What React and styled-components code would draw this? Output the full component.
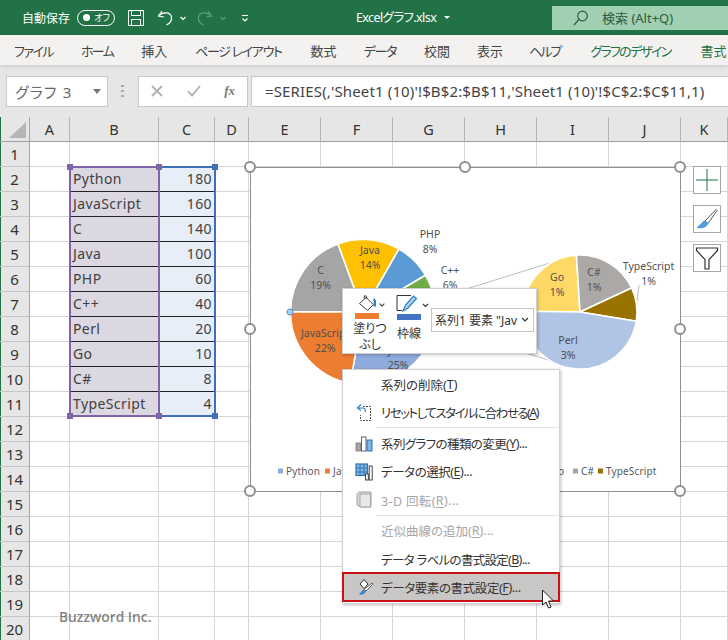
import styled, { createGlobalStyle } from 'styled-components'

const GlobalStyle = createGlobalStyle`
  html, body {
    margin: 0;
    padding: 0;
    background: #fff;
  }
  body {
    font-family: "Noto Sans", "Noto Sans CJK JP", sans-serif;
    font-feature-settings: "palt";
    color: #333;
  }
`

const Page = styled.div`
  position: relative;
  width: 728px;
  height: 640px;
  overflow: hidden;
  background: #fff;
`

/* title bar */
const TitleBar = styled.div`
  display: flex;
  align-items: center;
  height: 35px;
  background: #217346;
  color: #fff;
  font-size: 13px;
`

const AutoSave = styled.span`
  margin-left: 22px;
  font-size: 12px;
`

const Toggle = styled.span`
  display: flex;
  align-items: center;
  justify-content: space-between;
  box-sizing: border-box;
  width: 38px;
  height: 16px;
  margin-left: 7px;
  padding: 0 4px 0 5px;
  border: 1.2px solid #fff;
  border-radius: 8px;
  font-size: 9px;

  i {
    width: 7px;
    height: 7px;
    border-radius: 50%;
    background: #fff;
  }
`

const QatIcon = styled.svg`
  display: block;
  flex: none;
  margin-left: ${p => p.$ml}px;
`

const FileName = styled.span`
  position: absolute;
  left: 356px;
  top: 9px;
  font-size: 12.5px;
  line-height: 18px;
  letter-spacing: -0.6px;
`

const FileCaret = styled.span`
  position: absolute;
  left: 444px;
  top: 10px;
  width: 0;
  height: 0;
  border: 3px solid transparent;
  border-top: 3px solid #fff;
  margin-top: 6px;
`

const SearchBox = styled.div`
  display: flex;
  align-items: center;
  box-sizing: border-box;
  margin-left: auto;
  width: 176px;
  height: 24px;
  padding-left: 21px;
  gap: 13px;
  background: #a1cfb1;
  color: #2b5c41;
  font-size: 13px;
`

/* ribbon tabs */
const Tabs = styled.div`
  position: relative;
  z-index: 1;
  display: flex;
  align-items: center;
  height: 30px;
  padding-left: 14px;
  background: #f3f2f1;
  box-shadow: 0 2px 4px rgba(0, 0, 0, 0.1);
  font-size: 13px;
  white-space: nowrap;
`

const Tab = styled.span`
  margin-right: ${p => p.$gap || 28}px;
  letter-spacing: ${p => p.$ls || 0}px;
  color: ${p => (p.$active ? '#217346' : '#444')};
`

/* formula bar */
const FormulaBar = styled.div`
  display: flex;
  align-items: center;
  height: 52px;
  padding: 0 0 0 6px;
  background: #e6e6e6;
  box-sizing: border-box;
`

const NameBox = styled.div`
  display: flex;
  align-items: center;
  justify-content: space-between;
  box-sizing: border-box;
  width: 102px;
  height: 31px;
  padding: 0 6px 0 8px;
  background: #fff;
  border: 1px solid #c8c8c8;
  font-size: 15px;
  letter-spacing: 1.2px;
  color: #666;

  i {
    width: 0;
    height: 0;
    border: 4px solid transparent;
    border-top: 5px solid #777;
    margin-top: 4px;
  }
`

const Grip = styled.span`
  width: 3px;
  height: 12px;
  margin: 0 14px 0 13px;
  background: repeating-linear-gradient(#aaa 0 2px, transparent 2px 5px);
`

const FxBox = styled.div`
  display: flex;
  align-items: center;
  justify-content: space-between;
  box-sizing: border-box;
  width: 110px;
  height: 31px;
  padding: 0 12px;
  background: #fff;
  border: 1px solid #c8c8c8;
`

const FxText = styled.span`
  font-family: "Liberation Serif", serif;
  font-style: italic;
  font-weight: bold;
  font-size: 13px;
  color: #777;
`

const FormulaInput = styled.div`
  display: flex;
  align-items: center;
  box-sizing: border-box;
  flex: 1;
  height: 31px;
  margin-left: 3px;
  padding-left: 13px;
  background: #fff;
  border: 1px solid #c8c8c8;
  border-right: none;
  font-size: 15px;
  letter-spacing: 0.14px;
  color: #444;
  white-space: nowrap;
`

/* sheet */
const Sheet = styled.div`
  display: grid;
  grid-template-columns: 30px 40px 89px 56px 34px repeat(6, 72px) 47px;
  grid-auto-rows: 25px;
`

const Corner = styled.div`
  position: relative;
  background: #e6e6e6;
  border-right: 1px solid #a6a6a6;
  border-bottom: 1px solid #9f9f9f;
  box-shadow: inset 1px 0 0 #217346;

  &::after {
    content: '';
    position: absolute;
    right: 3px;
    bottom: 3px;
    border-style: solid;
    border-width: 0 0 16px 17px;
    border-color: transparent transparent #b5b5b5 transparent;
  }
`

const ColHead = styled.div`
  display: flex;
  align-items: center;
  justify-content: center;
  box-sizing: border-box;
  padding-bottom: 1px;
  background: #e6e6e6;
  border-right: 1px solid #b4b4b4;
  border-bottom: 1px solid #9f9f9f;
  font-size: 14.5px;
  color: #333;
`

const RowHead = styled.div`
  display: flex;
  align-items: center;
  justify-content: center;
  box-sizing: border-box;
  padding-bottom: 1px;
  background: #e6e6e6;
  border-right: 1px solid #a6a6a6;
  border-bottom: 1px solid #c6c6c6;
  box-shadow: inset 1px 0 0 #217346;
  font-size: 15px;
  color: #333;
`

const Cell = styled.div`
  display: flex;
  align-items: center;
  justify-content: ${p => (p.$num ? 'flex-end' : 'flex-start')};
  box-sizing: border-box;
  padding: 0 2px 2px 3px;
  background: ${p => p.$fill || '#fff'};
  border-right: 1px solid #d6d6d6;
  border-bottom: 1px solid ${p => (p.$fill ? '#222' : '#d6d6d6')};
  font-size: 14px;
  letter-spacing: 0.4px;
  color: #404040;
  white-space: nowrap;
`

/* range highlight round the chart's source cells */
const Range = styled.div`
  position: absolute;
  top: 166px;
  left: ${p => p.$left}px;
  width: ${p => p.$width}px;
  height: 251px;
  box-sizing: border-box;
  border: 2px solid ${p => p.$color};
`

const RangeHandle = styled.span`
  position: absolute;
  width: 6px;
  height: 6px;
  background: ${p => p.$color};
  ${p => (p.$right ? 'right: -4px;' : 'left: -4px;')}
  ${p => (p.$bottom ? 'bottom: -4px;' : 'top: -4px;')}
`

/* chart object */
const Chart = styled.div`
  position: absolute;
  left: 249.5px;
  top: 166.5px;
  width: 431.5px;
  height: 325px;
  box-sizing: border-box;
  background: #fff;
  border: 1.5px solid #8f8f8f;
`

const ChartHandle = styled.span`
  position: absolute;
  left: ${p => p.$x}px;
  top: ${p => p.$y}px;
  box-sizing: border-box;
  width: 12px;
  height: 12px;
  margin: -6px 0 0 -6px;
  background: #fff;
  border: 2px solid #8f8f8f;
  border-radius: 50%;
`

const PieSvg = styled.svg`
  position: absolute;
  left: -1px;
  top: 0;
  display: block;
`

const SideButtons = styled.div`
  position: absolute;
  left: 693px;
  top: 166px;
  display: flex;
  flex-direction: column;
  gap: 11px;
`

const SideButton = styled.div`
  display: flex;
  align-items: center;
  justify-content: center;
  box-sizing: border-box;
  width: 28px;
  height: 28px;
  background: #fff;
  border: 1px solid #a6a6a6;
`

/* mini toolbar */
const MiniBar = styled.div`
  position: absolute;
  left: 342px;
  top: 288px;
  display: flex;
  box-sizing: border-box;
  width: 195px;
  height: 66px;
  padding: 6px 0 0 9px;
  background: #fff;
  border: 1px solid #d0d0d0;
  box-shadow: 1px 1px 3px rgba(0, 0, 0, 0.25);
`

const MiniTool = styled.div`
  display: flex;
  flex-direction: column;
  align-items: ${p => (p.$start ? 'flex-start' : 'center')};
  width: ${p => p.$w}px;
  margin-right: ${p => p.$mr}px;
  font-size: 12px;
  line-height: 16px;
  color: #333;
  text-align: center;
`

const Swatch = styled.span`
  display: block;
  align-self: flex-start;
  margin-left: ${p => p.$ml}px;
  width: 24px;
  height: 6px;
  margin-top: 1px;
  margin-bottom: 2px;
  background: ${p => p.$color};
`

const MiniLabel = styled.span`
  margin: ${p => p.$mt || 0}px 0 0 ${p => p.$ml || 0}px;
`

const SeriesSelect = styled.div`
  display: flex;
  align-items: center;
  justify-content: space-between;
  box-sizing: border-box;
  width: 103px;
  height: 24px;
  margin-top: 13px;
  margin-left: -9px;
  padding: 0 3px 0 3px;
  border: 1px solid #c6c6c6;
  font-size: 12px;
  color: #333;
  white-space: nowrap;
  overflow: hidden;
`

/* context menu */
const Menu = styled.div`
  position: absolute;
  left: 342px;
  top: 369px;
  box-sizing: border-box;
  width: 218px;
  height: 235px;
  background: #fff;
  border: 1px solid #d0d0d0;
  box-shadow: 1px 1px 3px rgba(0, 0, 0, 0.25);
`

const MenuItem = styled.div`
  position: relative;
  display: flex;
  align-items: center;
  height: 28.5px;
  padding-left: 38px;
  font-size: 12.5px;
  letter-spacing: ${p => p.$ls || 0}px;
  color: ${p => (p.$disabled ? '#a6a6a6' : '#333')};
  white-space: nowrap;

  u {
    text-underline-offset: 2px;
  }
`

const ActiveItem = styled(MenuItem)`
  box-sizing: border-box;
  height: 30.5px;
  margin: -2px -1px 0;
  padding: 2px 0 0 37px;
  background: #c9c7c5;
  border: 2px solid #cc1016;
`

const MenuIcon = styled.svg`
  position: absolute;
  left: 12px;
  top: 50%;
  margin-top: -9px;
`

const MenuSep = styled.div`
  height: 2px;
  margin-left: 33px;
  background: linear-gradient(#e2e2e2 1px, transparent 1px);
`

const Watermark = styled.div`
  position: absolute;
  left: 59px;
  top: 608px;
  font-family: "Open Sans", sans-serif;
  font-weight: 600;
  font-size: 13.8px;
  line-height: 18px;
  color: rgba(90, 90, 90, 0.75);
`

const Pointer = styled.svg`
  position: absolute;
  left: 541px;
  top: 589px;
`

/* data */
const columns = ['A', 'B', 'C', 'D', 'E', 'F', 'G', 'H', 'I', 'J', 'K']
const languages = [
  ['Python', 180], ['JavaScript', 160], ['C', 140], ['Java', 100], ['PHP', 60],
  ['C++', 40], ['Perl', 20], ['Go', 10], ['C#', 8], ['TypeScript', 4],
]
const rows = Array.from({ length: 20 }, (_, i) => i + 1)

const mainSlices = [
  { from: -90, to: -20.2, color: '#a5a5a5' },
  { from: -20.2, to: 29.7, color: '#ffc000' },
  { from: 29.7, to: 59.6, color: '#5b9bd5' },
  { from: 59.6, to: 79.5, color: '#70ad47' },
  { from: 79.5, to: 100.45, color: '#264478' },
  { from: 100.45, to: 190.2, color: '#8faadc' },
  { from: 190.2, to: 270, color: '#ed7d31' },
]
const subSlices = [
  { from: -89.3, to: -3.6, color: '#ffd966' },
  { from: -3.6, to: 65, color: '#aba8a6' },
  { from: 65, to: 99.3, color: '#997300' },
  { from: 99.3, to: 270.7, color: '#b0c4e6' },
]
const labels = [
  ['PHP', '8%', 430, 238],
  ['C++', '6%', 450, 274],
  ['Java', '14%', 370, 254],
  ['C', '19%', 320.5, 274],
  ['JavaScript', '22%', 325, 337],
  ['Python', '25%', 398, 354],
  ['Go', '1%', 557, 281],
  ['C#', '1%', 594, 276],
  ['TypeScript', '1%', 648.5, 270],
  ['Perl', '3%', 568, 344],
]
const legend = [
  ['Python', 278, '#8faadc'],
  ['JavaScript', 325, '#ed7d31'],
  ['C#', 573, '#a5a5a5'],
  ['TypeScript', 598, '#997300'],
]

const slicePath = (cx, cy, r, from, to) => {
  const rad = a => (a * Math.PI) / 180
  const x1 = cx + r * Math.sin(rad(from))
  const y1 = cy - r * Math.cos(rad(from))
  const x2 = cx + r * Math.sin(rad(to))
  const y2 = cy - r * Math.cos(rad(to))
  const large = to - from > 180 ? 1 : 0
  return `M${cx} ${cy} L${x1} ${y1} A${r} ${r} 0 ${large} 1 ${x2} ${y2} Z`
}

const PieChart = () => (
  <PieSvg width="431" height="324" viewBox="250 168 431 324">
    <line x1="434" y1="299" x2="553" y2="262" stroke="#bdbdbd" />
    <line x1="434" y1="325" x2="578" y2="369" stroke="#bdbdbd" />
    <line x1="639" y1="285" x2="636.5" y2="305" stroke="#bdbdbd" />
    {mainSlices.map(s => (
      <path key={s.from} d={slicePath(363, 312, 72.5, s.from, s.to)} fill={s.color} stroke="#fff" strokeWidth="1.6" />
    ))}
    {subSlices.map(s => (
      <path key={s.from} d={slicePath(580, 312, 57, s.from, s.to)} fill={s.color} stroke="#fff" strokeWidth="1.6" />
    ))}
    <circle cx="290" cy="312" r="3" fill="#a9d0f0" stroke="#4a90d0" strokeWidth="1" />
    {labels.map(([name, pct, x, y]) => (
      <text key={name} x={x} textAnchor="middle" fontSize="10.5" fill="#505050" fontFamily="Noto Sans, sans-serif">
        <tspan x={x} y={y}>{name}</tspan>
        <tspan x={x} y={y + 15}>{pct}</tspan>
      </text>
    ))}
    {legend.map(([name, x, color]) => (
      <g key={name}>
        <rect x={x} y="468.5" width="5" height="5" fill={color} />
        <text x={x + 8} y="475" fontSize="10" fill="#595959" fontFamily="Noto Sans, sans-serif" letterSpacing="0.15">{name}</text>
      </g>
    ))}
    <text x="558" y="475" fontSize="10" fill="#595959" fontFamily="Noto Sans, sans-serif">o</text>
  </PieSvg>
)

const handles = [
  [-0.75, -0.75], [214, -0.75], [429, -0.75], [429, 161], [429, 323], [214, 323], [-0.75, 323], [-0.75, 161],
]

const App = () => {
  return (
    <Page>
      <GlobalStyle />
      <TitleBar>
        <AutoSave>自動保存</AutoSave>
        <Toggle><i />オフ</Toggle>
        <QatIcon $ml={13} width="16" height="16" viewBox="0 0 16 16" fill="none" stroke="#fff" strokeWidth="1">
          <path d="M.5.5h15v15H.5z" />
          <path d="M3.5.5v5h9v-5M3.5 15.5v-6h9v6" />
        </QatIcon>
        <QatIcon $ml={13} width="16" height="16" viewBox="0 0 16 16" fill="none" stroke="#fff" strokeWidth="1.2">
          <path d="M5 1 1.5 6l5.5 1" />
          <path d="M2 5.8C5 2 13.5 1.5 14.5 7c.5 3.5-2 6.5-5 8" />
        </QatIcon>
        <QatIcon $ml={6} width="8" height="8" viewBox="0 0 8 8" fill="none" stroke="#fff" strokeWidth="1.2">
          <path d="m1.500 3 2.500 2.500L6.500 3" />
        </QatIcon>
        <QatIcon $ml={10} width="16" height="16" viewBox="0 0 16 16" fill="none" stroke="#5c9c79" strokeWidth="1.2">
          <path d="m11 1 3.500 5L9 7" />
          <path d="M14 5.800C11 2 2.500 1.500 1.500 7c-.5 3.500 2 6.500 5 8" />
        </QatIcon>
        <QatIcon $ml={6} width="8" height="8" viewBox="0 0 8 8" fill="none" stroke="#5c9c79" strokeWidth="1.2">
          <path d="m1.500 3 2.500 2.500L6.500 3" />
        </QatIcon>
        <QatIcon $ml={14} width="8" height="8" viewBox="0 0 8 8" fill="none" stroke="#fff" strokeWidth="1.100">
          <path d="M1 1.500h6M1.500 4.500 4 7l2.500-2.500" />
        </QatIcon>
        <FileName>Excelグラフ.xlsx</FileName>
        <FileCaret />
        <SearchBox>
          <svg width="16" height="16" viewBox="0 0 16 16" fill="none" stroke="#2b5c41" strokeWidth="1.200">
            <circle cx="9.500" cy="6" r="4.800" />
            <path d="M6 9.500 1 15" />
          </svg>
          <span>検索 (Alt+Q)</span>
        </SearchBox>
      </TitleBar>

      <Tabs>
        <Tab $ls={-1.5}>ファイル</Tab>
        <Tab $ls={-1.7}>ホーム</Tab>
        <Tab>挿入</Tab>
        <Tab $ls={-1.35} $gap={29}>ページ レイアウト</Tab>
        <Tab $gap={27}>数式</Tab>
        <Tab $ls={-1.3}>データ</Tab>
        <Tab $gap={27}>校閲</Tab>
        <Tab $gap={26}>表示</Tab>
        <Tab $ls={-2} $gap={30}>ヘルプ</Tab>
        <Tab $active $ls={-1.75} $gap={30}>グラフのデザイン</Tab>
        <Tab $active>書式</Tab>
      </Tabs>

      <FormulaBar>
        <NameBox>グラフ 3<i /></NameBox>
        <Grip />
        <FxBox>
          <svg width="12" height="12" viewBox="0 0 12 12" stroke="#b0b0b0" strokeWidth="1.800">
            <path d="m1 1 10 10M11 1 1 11" />
          </svg>
          <svg width="14" height="12" viewBox="0 0 14 12" fill="none" stroke="#b0b0b0" strokeWidth="1.800">
            <path d="m1 6 4 4.500L13 1" />
          </svg>
          <FxText>fx</FxText>
        </FxBox>
        <FormulaInput>=SERIES(,'Sheet1 (10)'!$B$2:$B$11,'Sheet1 (10)'!$C$2:$C$11,1)</FormulaInput>
      </FormulaBar>

      <Sheet>
        <Corner />
        {columns.map(c => <ColHead key={c}>{c}</ColHead>)}
        {rows.map(r => {
          const lang = languages[r - 2]
          return columns.reduce((cells, c) => {
            if (c === 'B' && lang) cells.push(<Cell key={c + r} $fill="#dcd8e2">{lang[0]}</Cell>)
            else if (c === 'C' && lang) cells.push(<Cell key={c + r} $fill="#e7eef8" $num>{lang[1]}</Cell>)
            else cells.push(<Cell key={c + r} />)
            return cells
          }, [<RowHead key={r}>{r}</RowHead>])
        })}
      </Sheet>

      <Range $left={158} $width={58} $color="#3f70b8">
        <RangeHandle $right $color="#3f70b8" />
        <RangeHandle $right $bottom $color="#3f70b8" />
      </Range>
      <Range $left={69} $width={91} $color="#8063a8">
        <RangeHandle $color="#8063a8" />
        <RangeHandle $right $color="#8063a8" />
        <RangeHandle $bottom $color="#8063a8" />
        <RangeHandle $right $bottom $color="#8063a8" />
      </Range>

      <Chart>
        <PieChart />
        {handles.map(([x, y]) => <ChartHandle key={`${x}-${y}`} $x={x} $y={y} />)}
      </Chart>

      <SideButtons>
        <SideButton>
          <svg width="24" height="24" viewBox="0 0 24 24" stroke="#217346" strokeWidth="1">
            <path d="M12 1v22M1 12h22" />
          </svg>
        </SideButton>
        <SideButton>
          <svg width="24" height="24" viewBox="0 0 24 24">
            <path d="M10 14 21 2.500l1 1L13 16.500z" fill="#fff" stroke="#555" strokeWidth="1" />
            <path d="M10 14c-3 0-3 3-5 4l-3 2.500c4 1 9 .5 11-4z" fill="#4f9fe0" stroke="#3a85c5" strokeWidth=".6" />
          </svg>
        </SideButton>
        <SideButton>
          <svg width="24" height="24" viewBox="0 0 24 24" fill="none" stroke="#333" strokeWidth="1.200">
            <path d="M1.500 2h21v2.500L14 13.500V23h-4v-9.500L1.500 4.500z" />
          </svg>
        </SideButton>
      </SideButtons>

      <MiniBar>
        <MiniTool $w={36} $mr={8}>
          <svg width="36" height="18" viewBox="0 0 36 18" fill="none" stroke="#333" strokeWidth="1">
            <path d="M7 9l7-6.500 7.500 7.500-6 6z" />
            <path d="M12 4V1c2-1 2.500 0 2.500 3" />
            <path d="M21.500 4.500c2 0 2 5 1 7.500" stroke="#2e80c4" strokeWidth="2.400" />
            <path d="m28 9 2.500 2.500L33 9" strokeWidth="1.100" />
          </svg>
          <Swatch $ml={3} $color="#ed7d31" />
          <span>塗りつ</span>
          <span>ぶし</span>
        </MiniTool>
        <MiniTool $w={36} $mr={8} $start>
          <svg width="36" height="18" viewBox="0 0 36 18" fill="none" stroke="#333" strokeWidth="1">
            <path d="M15 .5H1v15h5" />
            <path d="M7 16 9.500 10l8-9 3 2.500-8.500 9.500z" fill="#a9d0f0" stroke="#2e80c4" strokeWidth="1.200" />
            <path d="m27 9 2.500 2.500L32 9" strokeWidth="1.100" />
          </svg>
          <Swatch $ml={1} $color="#4472c4" />
          <MiniLabel $mt={4} $ml={1}>枠線</MiniLabel>
        </MiniTool>
        <SeriesSelect>
          <span>系列1 要素 "Jav</span>
          <svg width="10" height="8" viewBox="0 0 10 8" fill="none" stroke="#333" strokeWidth="1.200">
            <path d="m2 2 3 3 3-3" />
          </svg>
        </SeriesSelect>
      </MiniBar>

      <Menu>
        <MenuItem>系列の削除(<u>T</u>)</MenuItem>
        <MenuItem $ls={-1.5}>
          <MenuIcon width="18" height="18" viewBox="0 0 18 18" fill="none">
            <path d="M8 2.500h7.500v14h-10V11" stroke="#555" strokeWidth="1" strokeDasharray="2 1" />
            <path d="M6 .5 2.500 4 6 6.500M3 4h5c2 0 3 2 2 4" stroke="#2e80c4" strokeWidth="1.200" />
          </MenuIcon>
          リセットしてスタイルに合わせる(<u>A</u>)
        </MenuItem>
        <MenuSep />
        <MenuItem $ls={-0.6}>
          <MenuIcon width="18" height="18" viewBox="0 0 18 18">
            <rect x="1" y="9" width="4.500" height="8" fill="#a6a6a6" stroke="#7a7a7a" strokeWidth=".8" />
            <rect x="6.500" y="3" width="4.500" height="14" fill="#fff" stroke="#666" strokeWidth="1" />
            <rect x="12" y="6" width="5" height="11" fill="#7fb6e8" stroke="#2e70b0" strokeWidth="1" />
          </MenuIcon>
          系列グラフの種類の変更(<u>Y</u>)...
        </MenuItem>
        <MenuItem $ls={-0.45}>
          <MenuIcon width="18" height="18" viewBox="0 0 18 18">
            <rect x="1" y="1" width="11.500" height="11.500" fill="#7fb6e8" stroke="#2e70b0" strokeWidth="1.200" />
            <path d="M1 5h11.500M1 9h11.500M5 1v11.500M9 1v11.500" stroke="#2e70b0" strokeWidth=".9" />
            <rect x="10.500" y="11" width="2.800" height="6" fill="#fff" stroke="#333" strokeWidth=".9" />
            <rect x="14.200" y="3" width="3" height="14" fill="#fff" stroke="#333" strokeWidth=".9" />
          </MenuIcon>
          データの選択(<u>E</u>)...
        </MenuItem>
        <MenuItem $disabled $ls={0.35}>
          <MenuIcon width="18" height="18" viewBox="0 0 18 18">
            <path d="M4 1h12v15H6L2 14V3z" fill="#d9d9d9" stroke="#a6a6a6" strokeWidth="1" />
            <path d="M5 3h10.500v13H5z" fill="#e8e8e8" stroke="#a6a6a6" strokeWidth="1" />
          </MenuIcon>
          3-D 回転(<u>R</u>)...
        </MenuItem>
        <MenuSep />
        <MenuItem $disabled>近似曲線の追加(<u>R</u>)...</MenuItem>
        <MenuItem $ls={-0.7}>データ ラベルの書式設定(<u>B</u>)...</MenuItem>
        <ActiveItem $ls={-0.4}>
          <MenuIcon width="18" height="18" viewBox="0 0 18 18" fill="none">
            <path d="M4 6 8 1.500 12 6 8 10.500z" fill="#fff" stroke="#333" strokeWidth="1" />
            <path d="M8 11.500 16 5l1 1-7 7z" fill="#fff" stroke="#555" strokeWidth=".9" />
            <path d="M8 11.500c-2 0-2 2.500-4 3.500l-1 1.500c3 .5 6 0 7-3.500z" fill="#3a85c5" />
          </MenuIcon>
          データ要素の書式設定(<u>F</u>)...
        </ActiveItem>
      </Menu>

      <Watermark>Buzzword Inc.</Watermark>

      <Pointer width="14" height="20" viewBox="0 0 14 20">
        <path d="M1.500 1v15l3.500-3 2.500 6 2.500-1-2.500-6h5z" fill="#fff" stroke="#222" strokeWidth="1" />
      </Pointer>
    </Page>
  )
}

export default App
